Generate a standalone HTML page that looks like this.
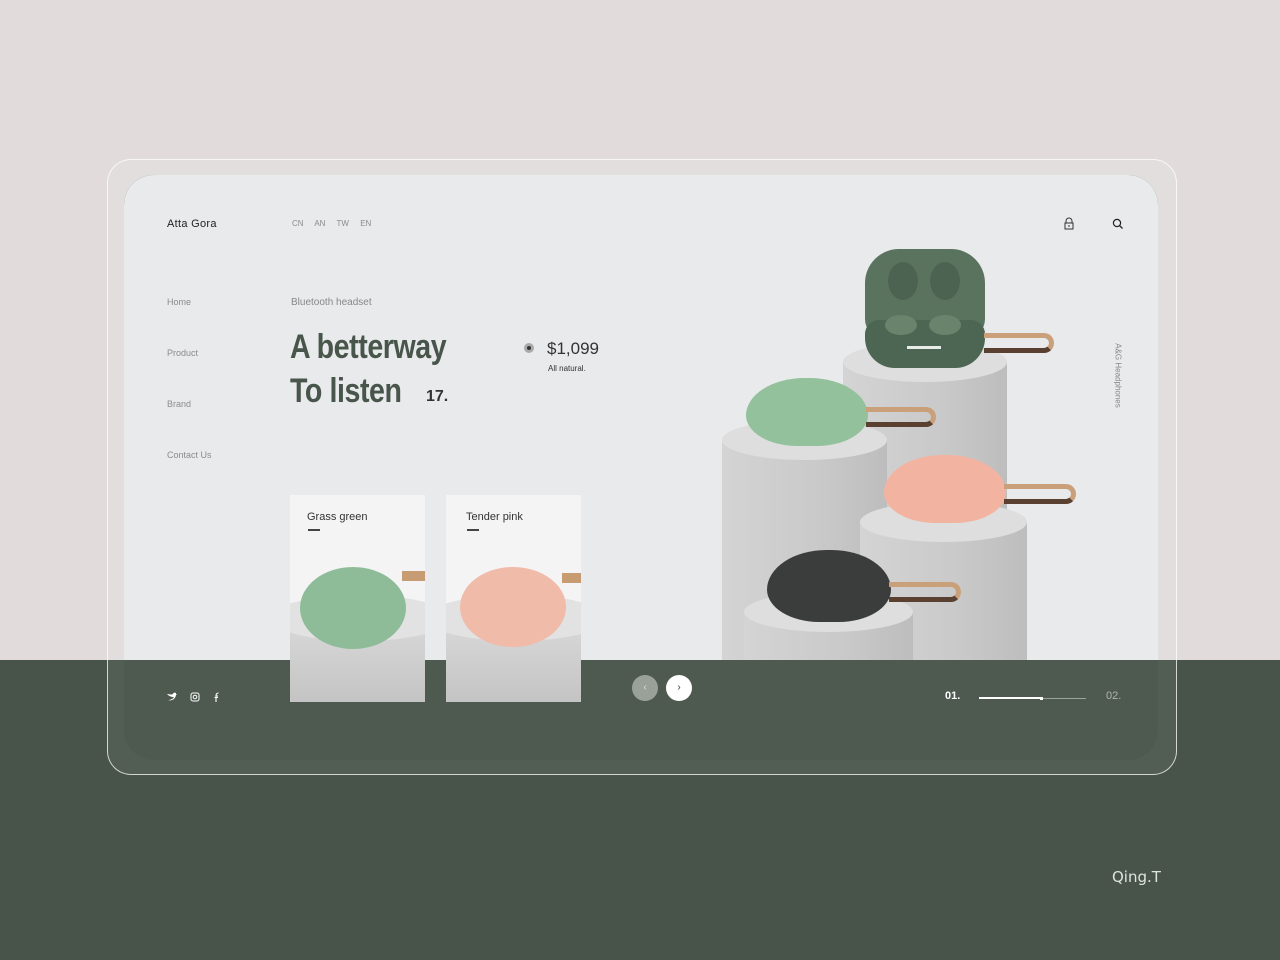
<!DOCTYPE html>
<html><head><meta charset="utf-8"><style>
*{margin:0;padding:0;box-sizing:border-box}
body{width:1280px;height:960px;overflow:hidden;position:relative;background:#48544a;font-family:"Liberation Sans",sans-serif}
.top{position:absolute;left:0;top:0;width:1280px;height:660px;background:#e1dcdb}
.frame{position:absolute;left:107px;top:159px;width:1070px;height:616px;border:1.5px solid rgba(255,255,255,.75);border-radius:24px;background:rgba(255,255,255,.06)}
.card{position:absolute;left:124px;top:175px;width:1034px;height:585px;border-radius:30px;overflow:hidden;background:#4e5a50}
.card .l{position:absolute;left:0;top:0;width:100%;height:485px;background:#e9eaeb}
.a{position:absolute;white-space:nowrap}
.nav{font-size:9px;color:#8a8c8c}
.cyl{position:absolute;background:linear-gradient(90deg,#d4d4d4,#c9c9c9 60%,#bdbdbd)}
.cyl:before{content:"";position:absolute;left:0;top:-20px;width:100%;height:40px;border-radius:50%;background:#dedede}
.case{position:absolute;border-radius:48% 48% 42% 42%/55% 55% 45% 45%}
.strap{position:absolute;height:20px;border:5px solid #c9a07a;border-left:none;border-radius:0 12px 12px 0;border-bottom-color:#5a4030}
.mini{position:absolute;background:#f4f4f5;overflow:hidden}
</style></head><body>
<div class="top"></div>
<div class="frame"></div>
<div class="card"><div class="l"></div></div>

<div class="a" style="left:167px;top:218px;font-size:11px;color:#222;letter-spacing:.3px">Atta Gora</div>
<div class="a nav" style="left:292px;top:219px;font-size:8px;word-spacing:9px">CN AN TW EN</div>
<div class="a nav" style="left:167px;top:297px">Home</div>
<div class="a nav" style="left:167px;top:348px">Product</div>
<div class="a nav" style="left:167px;top:399px">Brand</div>
<div class="a nav" style="left:167px;top:450px">Contact Us</div>
<div class="a" style="left:291px;top:297px;font-size:10px;color:#888">Bluetooth headset</div>
<div class="a" style="left:290px;top:328px;font-size:34px;font-weight:bold;color:#48554a;transform:scaleX(.84);transform-origin:left;letter-spacing:-.5px">A betterway</div>
<div class="a" style="left:290px;top:372px;font-size:34px;font-weight:bold;color:#48554a;transform:scaleX(.84);transform-origin:left;letter-spacing:-.5px">To listen</div>
<div class="a" style="left:426px;top:388px;font-size:16px;font-weight:bold;color:#333">17.</div>
<div class="a" style="left:524px;top:343px;width:10px;height:10px;border-radius:50%;background:#aaa"><div style="margin:3px;width:4px;height:4px;border-radius:50%;background:#333"></div></div>
<div class="a" style="left:547px;top:339px;font-size:17px;color:#333">$1,099</div>
<div class="a" style="left:548px;top:364px;font-size:8px;color:#333">All natural.</div>
<div class="a" style="left:1083px;top:371px;width:70px;font-size:8px;color:#888;transform:rotate(90deg);transform-origin:center;text-align:center">A&amp;G Headphones</div>

<svg class="a" style="left:1063px;top:217px" width="12" height="13" viewBox="0 0 12 13"><path d="M3 6V4a3 3 0 0 1 6 0v2M2 6h8v6H2z" fill="none" stroke="#333" stroke-width="1"/><path d="M6 8v2" stroke="#333"/></svg>
<svg class="a" style="left:1112px;top:218px" width="12" height="12" viewBox="0 0 12 12"><circle cx="5" cy="5" r="3.6" fill="none" stroke="#222" stroke-width="1.2"/><path d="M7.7 7.7L10.5 10.5" stroke="#222" stroke-width="1.3"/></svg>

<!-- pedestals -->
<div class="cyl" style="left:843px;top:362px;width:164px;height:298px"></div>
<div class="cyl" style="left:722px;top:440px;width:165px;height:220px"></div>
<div class="cyl" style="left:860px;top:522px;width:167px;height:138px"></div>
<div class="cyl" style="left:744px;top:612px;width:169px;height:48px"></div>

<!-- cases -->
<div class="a" style="left:865px;top:249px;width:120px;height:90px;border-radius:34px 34px 20px 20px;background:#5a735e"></div>
<div class="a" style="left:888px;top:262px;width:30px;height:38px;border-radius:50%;background:#4c6352"></div>
<div class="a" style="left:930px;top:262px;width:30px;height:38px;border-radius:50%;background:#4c6352"></div>
<div class="a" style="left:865px;top:320px;width:120px;height:48px;border-radius:14px 14px 30px 30px;background:#4d6553"></div>
<div class="a" style="left:885px;top:315px;width:32px;height:20px;border-radius:50%;background:#6a836d"></div>
<div class="a" style="left:929px;top:315px;width:32px;height:20px;border-radius:50%;background:#6a836d"></div>
<div class="a" style="left:907px;top:346px;width:34px;height:3px;background:#e8ece8"></div>
<div class="strap" style="left:984px;top:333px;width:70px"></div>
<div class="case" style="left:746px;top:378px;width:122px;height:68px;background:#93c19c"></div>
<div class="strap" style="left:866px;top:407px;width:70px"></div>
<div class="case" style="left:884px;top:455px;width:122px;height:68px;background:#f2b4a0"></div>
<div class="strap" style="left:1004px;top:484px;width:72px"></div>
<div class="case" style="left:767px;top:550px;width:124px;height:72px;background:#3b3d3c"></div>
<div class="strap" style="left:889px;top:582px;width:72px"></div>

<!-- mini cards -->
<div class="mini" style="left:290px;top:495px;width:135px;height:207px;background:linear-gradient(#f4f4f5 62%,#d6d6d6 66%,#c4c4c4)"><div class="a" style="left:-20px;top:100px;width:180px;height:46px;border-radius:50%;background:#e2e2e2"></div><div class="a" style="left:17px;top:16px;font-size:11px;color:#333">Grass green</div><div class="a" style="left:18px;top:34px;width:12px;height:2px;background:#444"></div>
<div class="a" style="left:10px;top:72px;width:106px;height:82px;border-radius:50%;background:#8fbc98"></div><div class="a" style="left:112px;top:76px;width:24px;height:10px;background:#c89c72"></div></div>
<div class="mini" style="left:446px;top:495px;width:135px;height:207px;background:linear-gradient(#f4f4f5 62%,#d6d6d6 66%,#c4c4c4)"><div class="a" style="left:-20px;top:100px;width:180px;height:46px;border-radius:50%;background:#e2e2e2"></div><div class="a" style="left:20px;top:16px;font-size:11px;color:#333">Tender pink</div><div class="a" style="left:21px;top:34px;width:12px;height:2px;background:#444"></div>
<div class="a" style="left:14px;top:72px;width:106px;height:80px;border-radius:50%;background:#f0bba9"></div><div class="a" style="left:116px;top:78px;width:20px;height:10px;background:#c89c72"></div></div>

<!-- bottom -->
<svg class="a" style="left:167px;top:692px" width="60" height="10" viewBox="0 0 60 10"><path d="M0 2c2 2 4 3 7 3-1 2-4 3-6 3 3 1 7 0 8-5l1-1-1 0 0-1c-2-1-3 0-3 1C4 3 2 2 0 2z" fill="#fff"/><rect x="24" y="1" width="8" height="8" rx="2" fill="none" stroke="#fff"/><circle cx="28" cy="5" r="1.8" fill="none" stroke="#fff"/><path d="M49 10V4h2M47.5 5.5h3.5M49 4c0-2 1-3 2.5-3" fill="none" stroke="#fff" stroke-width="1.1"/></svg>
<div class="a" style="left:632px;top:675px;width:26px;height:26px;border-radius:50%;background:#9aa199;color:#ddd;font-size:10px;text-align:center;line-height:26px">‹</div>
<div class="a" style="left:666px;top:675px;width:26px;height:26px;border-radius:50%;background:#fff;color:#333;font-size:10px;text-align:center;line-height:26px">›</div>
<div class="a" style="left:945px;top:690px;font-size:11px;color:#fff;font-weight:bold">01.</div>
<div class="a" style="left:979px;top:698px;width:107px;height:1px;background:#9aa49b"></div>
<div class="a" style="left:979px;top:697px;width:63px;height:2px;background:#fff"></div>
<div class="a" style="left:1040px;top:697px;width:3px;height:3px;background:#fff"></div>
<div class="a" style="left:1106px;top:690px;font-size:11px;color:#b0b6b0">02.</div>
<div class="a" style="left:1112px;top:868px;font-size:15px;color:#dfe3df;font-family:'DejaVu Sans',sans-serif">Qing.T</div>
</body></html>
